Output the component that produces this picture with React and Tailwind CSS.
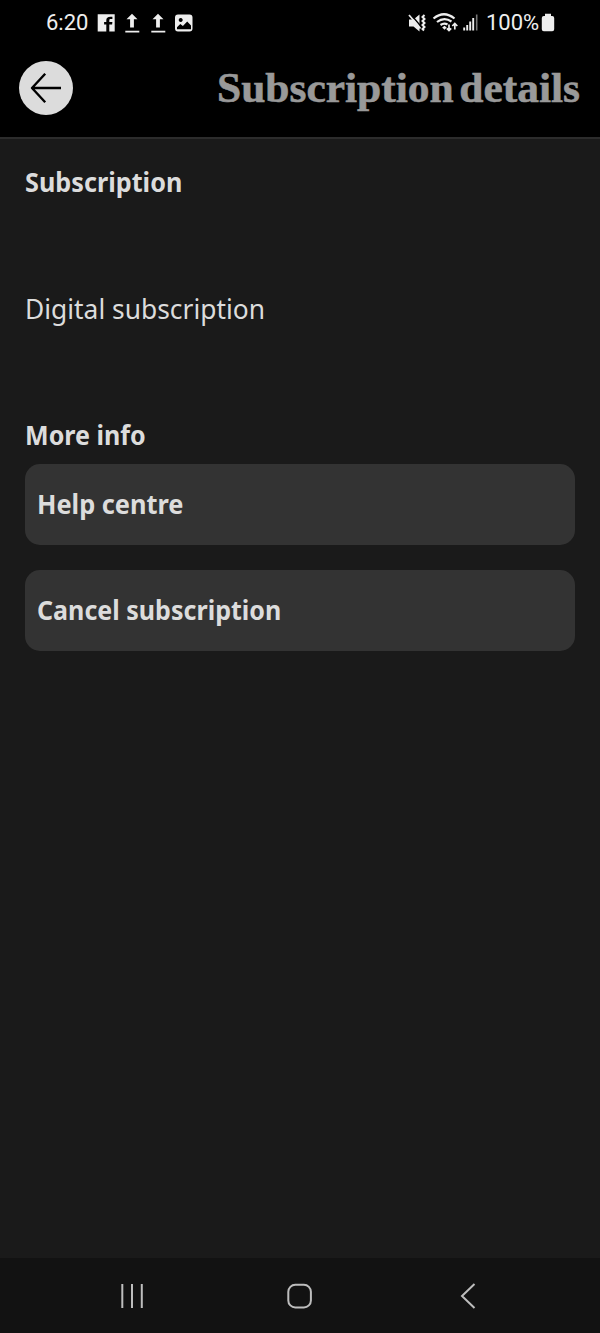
import React from "react";

const sans = "font-['Noto_Sans',sans-serif]";

function Label({ children, className }) {
  return (
    <span className={`${sans} inline-block origin-left whitespace-nowrap text-[27px] leading-9 text-[#dcdcdc] ${className}`}>
      {children}
    </span>
  );
}

function StatusBar() {
  return (
    <div className="flex h-[45px] shrink-0 items-center justify-between pl-[46px] pr-[45px] font-['Roboto',sans-serif] text-[22px] leading-none text-[#eeeeee]">
      <div className="flex items-center">
        <span className="w-[51px] whitespace-nowrap">6:20</span>
        <svg width="97" height="24" viewBox="97 10 97 24" fill="#eee">
          <path fillRule="evenodd" d="M97.700 13.300h17v17.200h-17zM106.300 30.500h3v-7h2.800l.3-2.400h-3.100v-1.800c0-1 .4-1.400 1.500-1.400h1.600v-2.200h-2c-2.800 0-4.100 1.400-4.100 3.600v1.800h-2.200v2.400h2.200z" />
          <path d="M132 12.800l-5.500 5.400h3.600v8.400h3.800v-8.400h3.600zM125.300 29.800h14v1.700h-14z" />
          <path d="M158 12.800l-5.500 5.400h3.600v8.400h3.800v-8.400h3.600zM151.300 29.800h14v1.700h-14z" />
          <path fillRule="evenodd" d="M178 13.500h11.500q3 0 3 3v11q0 3-3 3h-11.500q-3 0-3-3v-11q0-3 3-3zM180.700 17a2 2 0 1 0 .01 0zM177 28.200h14v-3.700l-3.800-4-4.300 4.500-2.600-2-3.300 3.200z" />
        </svg>
      </div>
      <div className="flex items-center">
        <svg width="79" height="24" viewBox="407 10 79 24" fill="none" stroke="#eee">
          <path d="M409 18.500h4.500l6-5v17l-6-5H409z" fill="#eee" stroke="none" />
          <path d="M410.500 13l10.500 12.500" stroke="#000" strokeWidth="1.400" />
          <path d="M409 14l11.500 13.500" strokeWidth="1.700" />
          <path d="M424.500 14l-2 2 2 2-2 2 2 2-2 2 2 2-2 2 1.500 1.500" strokeWidth="2" />
          <path d="M433.500 17.500q10.500-8.500 21 0M437 21q7-5.500 14.500-.500M440.500 24q3.500-2.500 7-.500" strokeWidth="2.200" />
          <path d="M444.500 24.800l2.200 1.700-2.200 2.300-2.300-2.300z" fill="#eee" stroke="none" />
          <path d="M449 23.500v6M446.800 27.300l2.200 2.200 2.200-2.200M454.800 28.500v-6M452.300 25l2.500-2.500 2.500 2.500" strokeWidth="1.700" />
          <path d="M464.200 26.500v3M467.200 24v5.500M470.200 20.500v9M473.200 17v12.500" strokeWidth="1.900" />
          <path d="M476.700 13.500v16" stroke="#777" strokeWidth="1.600" />
        </svg>
        <span className="w-[55px] whitespace-nowrap">100%</span>
        <svg width="14" height="20" viewBox="0 0 14 20" fill="#eee">
          <path d="M4 .800h6v2.200h1.200q2 0 2 2v11.300q0 2-2 2H2.800q-2 0-2-2V5q0-2 2-2h1.200z" />
        </svg>
      </div>
    </div>
  );
}

export default function App() {
  return (
    <div className="flex h-[1333px] w-[600px] flex-col overflow-hidden bg-[#1a1a1a]">
      <header className="flex h-[139px] shrink-0 flex-col border-b-2 border-[#2c2c2c] bg-black">
        <StatusBar />
        <div className="flex h-[85px] items-center justify-between pl-[19px] pr-5">
          <button aria-label="Back" className="flex size-[54px] items-center justify-center rounded-full bg-[#dcdcdc]">
            <svg width="34" height="34" viewBox="0 0 34 34" fill="none" stroke="#000" strokeWidth="2.400">
              <path d="M32 17H3M16.200 2.800L3 17l13.200 14.200" strokeLinejoin="round" />
            </svg>
          </button>
          <h1 className="origin-right scale-x-[1.034] whitespace-nowrap font-['Liberation_Serif',serif] text-[42px] font-bold leading-[48px] text-[#999999] [-webkit-text-stroke:0.6px_#999999] [word-spacing:-5px]">
            Subscription details
          </h1>
        </div>
      </header>
      <main className="flex grow flex-col px-[25px] pt-[25px]">
        <h2 className="h-9">
          <Label className="scale-x-[0.934] font-bold">Subscription</Label>
        </h2>
        <p className="mt-[91px] h-9">
          <Label className="scale-x-[0.977]">Digital subscription</Label>
        </p>
        <h2 className="mt-[90px] h-9">
          <Label className="scale-x-[0.928] font-bold">More info</Label>
        </h2>
        <div className="mt-[11px] flex flex-col gap-[25px]">
          <button className="flex h-[81px] items-center rounded-[15px] bg-[#333333] px-[12px] pb-[2px]">
            <Label className="scale-x-[0.94] font-bold">Help centre</Label>
          </button>
          <button className="flex h-[81px] items-center rounded-[15px] bg-[#333333] px-[12px] pb-[2px]">
            <Label className="scale-x-[0.928] font-bold">Cancel subscription</Label>
          </button>
        </div>
      </main>
      <nav className="flex h-[75px] shrink-0 items-center justify-between bg-[#121212] px-[118px]">
        <svg width="28" height="28" viewBox="0 0 28 28" stroke="#bdbdbd" strokeWidth="2">
          <path d="M4.300 2v24M14 2v24M23.800 2v24" />
        </svg>
        <svg width="28" height="28" viewBox="0 0 28 28" fill="none" stroke="#bdbdbd" strokeWidth="2">
          <rect x="2.300" y="2.800" width="22.600" height="22.600" rx="7" />
        </svg>
        <svg width="28" height="28" viewBox="0 0 28 28" fill="none" stroke="#bdbdbd" strokeWidth="2">
          <path d="M20.500 2L8 14l12.500 12" />
        </svg>
      </nav>
    </div>
  );
}
